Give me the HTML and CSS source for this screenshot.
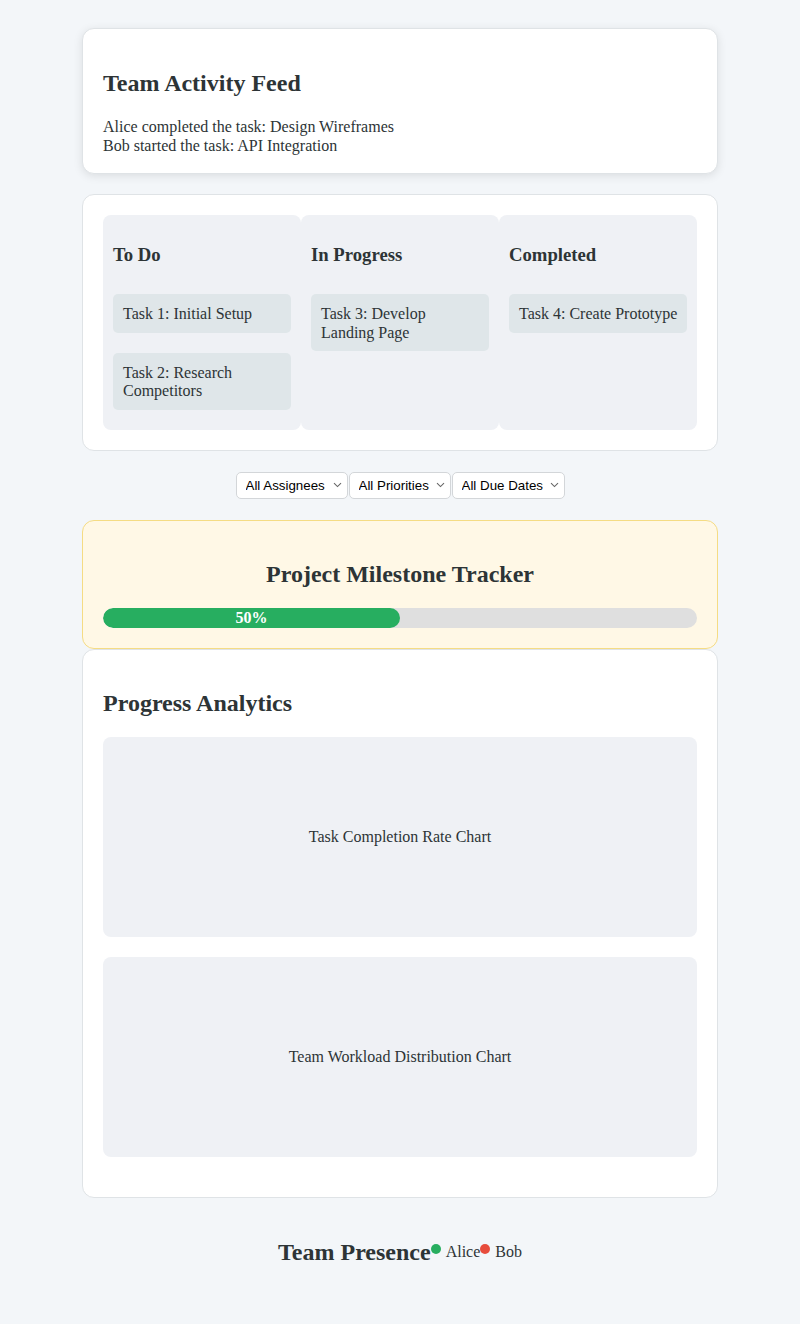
FILE: index.html
```html
<!DOCTYPE html>
<html lang="en">
<head>
<meta charset="utf-8">
<title>Team Dashboard</title>
<link rel="stylesheet" href="styles.css">
</head>
<body>
<div class="container">
  <section class="card card-shadow">
    <h2 class="title feed-title">Team Activity Feed</h2>
    <div class="feed">
      <div>Alice completed the task: Design Wireframes</div>
      <div>Bob started the task: API Integration</div>
    </div>
  </section>

  <section class="card">
    <div class="board">
      <div class="column">
        <h3 class="col-title">To Do</h3>
        <div class="task">Task 1: Initial Setup</div>
        <div class="task">Task 2: Research Competitors</div>
      </div>
      <div class="column">
        <h3 class="col-title">In Progress</h3>
        <div class="task">Task 3: Develop Landing Page</div>
      </div>
      <div class="column">
        <h3 class="col-title">Completed</h3>
        <div class="task">Task 4: Create Prototype</div>
      </div>
    </div>
  </section>

  <div class="filters">
    <select class="filter"><option>All Assignees</option></select>
    <select class="filter"><option>All Priorities</option></select>
    <select class="filter"><option>All Due Dates</option></select>
  </div>

  <section class="card milestone">
    <h2 class="title center">Project Milestone Tracker</h2>
    <div class="track">
      <div class="fill" style="width: 50%">50%</div>
    </div>
  </section>

  <section class="card analytics">
    <h2 class="title">Progress Analytics</h2>
    <div class="chart">Task Completion Rate Chart</div>
    <div class="chart">Team Workload Distribution Chart</div>
  </section>

  <footer class="presence">
    <h2 class="title">Team Presence</h2>
    <span class="member"><span class="dot online"></span>Alice</span>
    <span class="member"><span class="dot busy"></span>Bob</span>
  </footer>
</div>
</body>
</html>
```

FILE: styles.css
```css
html, body {
  margin: 0;
  padding: 0;
}
body {
  background: #f3f6f9;
  color: #2d3436;
  font-family: "Liberation Serif", "Times New Roman", serif;
  font-size: 16px;
}
.container {
  width: 636px;
  margin: 0 auto;
  padding-top: 28px;
}
.card {
  background: #ffffff;
  border: 1px solid #dfe3e6;
  border-radius: 12px;
  padding: 20px;
  margin-bottom: 20px;
}
.card-shadow {
  box-shadow: 0 2px 10px rgba(0, 0, 0, 0.1);
  padding-bottom: 18px;
}
.title {
  font-size: 24px;
  font-weight: bold;
  margin: 20px 0;
}
.feed-title {
  margin: 21px 0 20px;
}
.center {
  text-align: center;
}
.feed {
  line-height: 19px;
}
.board {
  display: flex;
}
.column {
  flex: 1;
  display: flex;
  flex-direction: column;
  background: #eff1f5;
  border-radius: 8px;
  padding: 10px;
  min-width: 0;
}
.col-title {
  font-size: 18.72px;
  font-weight: bold;
  margin: 18.72px 0;
}
.task {
  background: #dfe6e9;
  border-radius: 5px;
  padding: 11px 8px 9px 10px;
  margin: 10px 0;
  line-height: 18.4px;
}
.filters {
  display: flex;
  justify-content: center;
  gap: 1px;
  margin-top: 21px;
  margin-bottom: 21px;
}
.filter {
  appearance: none;
  -webkit-appearance: none;
  font-family: "Liberation Sans", Arial, sans-serif;
  font-size: 13.33px;
  line-height: 15px;
  padding: 5px 20px 5px 9px;
  border: 1px solid #d3d6d9;
  border-radius: 5px;
  color: #000;
  background-color: #ffffff;
  background-image: url("data:image/svg+xml,%3Csvg xmlns='http://www.w3.org/2000/svg' width='9' height='6' viewBox='0 0 9 6'%3E%3Cpath d='M1 1.2 L4.5 4.6 L8 1.2' fill='none' stroke='%23666' stroke-width='1.1'/%3E%3C/svg%3E");
  background-repeat: no-repeat;
  background-position: right 5px center;
  background-size: 9px 6px;
}
.milestone {
  background: #fff8e6;
  border-color: #f5dc84;
  margin-bottom: 0;
}
.track {
  height: 20px;
  background: #dfdfdf;
  border-radius: 10px;
  overflow: hidden;
}
.fill {
  height: 20px;
  background: #27ae60;
  border-radius: 10px;
  color: #ffffff;
  font-weight: bold;
  font-size: 16px;
  line-height: 20px;
  text-align: center;
}
.analytics {
  margin-bottom: 0;
}
.chart {
  height: 200px;
  background: #eff1f5;
  border-radius: 8px;
  display: flex;
  align-items: center;
  justify-content: center;
  margin-bottom: 20px;
}
.presence {
  display: flex;
  justify-content: center;
  align-items: center;
  padding-top: 40px;
  padding-bottom: 38px;
}
.presence .title {
  margin: 0;
  line-height: 28px;
}
.member {
  display: inline-flex;
  align-items: center;
}
.dot {
  width: 10px;
  height: 10px;
  border-radius: 50%;
  margin-right: 5px;
  position: relative;
  top: -3px;
}
.online {
  background: #27ae60;
}
.busy {
  background: #e74c3c;
}
```
